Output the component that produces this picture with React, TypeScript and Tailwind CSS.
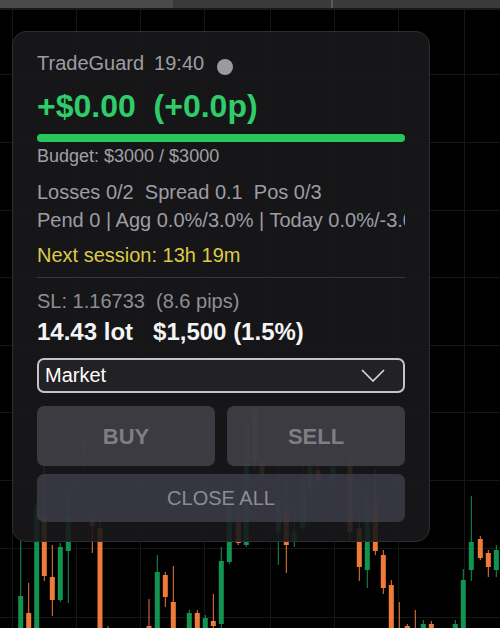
import React from 'react'

type Candle = { x: number; wt: number; bt: number; bb: number; wb: number; up: boolean }

// chart candles behind the panel (x, wick top, body top, body bottom, wick bottom)
const candles: Candle[] = [
  { x: 20.7, wt: 540, bt: 596, bb: 640, wb: 640, up: true },
  { x: 28.7, wt: 583, bt: 613, bb: 640, wb: 640, up: false },
  { x: 36.7, wt: 500, bt: 505, bb: 640, wb: 640, up: true },
  { x: 44.3, wt: 460, bt: 515, bb: 576, wb: 581, up: false },
  { x: 52.3, wt: 545, bt: 577, bb: 600, wb: 616, up: false },
  { x: 60.3, wt: 543, bt: 547, bb: 600, wb: 602, up: true },
  { x: 68.3, wt: 490, bt: 515, bb: 551, wb: 603, up: true },
  { x: 84, wt: 427, bt: 440, bb: 452, wb: 470, up: true },
  { x: 92.3, wt: 515, bt: 521, bb: 526, wb: 553, up: false },
  { x: 100, wt: 520, bt: 528, bb: 640, wb: 640, up: false },
  { x: 108, wt: 626, bt: 630, bb: 640, wb: 640, up: false },
  { x: 149, wt: 599, bt: 626, bb: 640, wb: 640, up: false },
  { x: 157.3, wt: 555, bt: 572, bb: 640, wb: 640, up: true },
  { x: 165.3, wt: 572, bt: 575, bb: 597, wb: 607, up: false },
  { x: 173.3, wt: 566, bt: 602, bb: 640, wb: 640, up: false },
  { x: 189.3, wt: 610, bt: 613, bb: 640, wb: 640, up: true },
  { x: 197.3, wt: 610, bt: 613, bb: 640, wb: 640, up: false },
  { x: 205.3, wt: 615, bt: 618, bb: 640, wb: 640, up: true },
  { x: 213.3, wt: 594, bt: 621, bb: 626, wb: 640, up: false },
  { x: 221.3, wt: 547, bt: 561, bb: 624, wb: 640, up: true },
  { x: 229.3, wt: 480, bt: 490, bb: 562, wb: 564, up: true },
  { x: 238.3, wt: 510, bt: 522, bb: 543, wb: 545, up: false },
  { x: 246.3, wt: 407, bt: 422, bb: 545, wb: 547, up: true },
  { x: 254.7, wt: 405, bt: 410, bb: 460, wb: 470, up: false },
  { x: 262, wt: 455, bt: 463, bb: 475, wb: 480, up: false },
  { x: 278.3, wt: 455, bt: 500, bb: 532, wb: 565, up: true },
  { x: 286.3, wt: 480, bt: 510, bb: 545, wb: 573, up: false },
  { x: 294.3, wt: 500, bt: 532, bb: 542, wb: 547, up: true },
  { x: 302.7, wt: 455, bt: 480, bb: 528, wb: 530, up: true },
  { x: 310, wt: 455, bt: 467, bb: 490, wb: 495, up: true },
  { x: 318, wt: 460, bt: 470, bb: 480, wb: 490, up: false },
  { x: 333, wt: 450, bt: 463, bb: 480, wb: 490, up: true },
  { x: 350, wt: 455, bt: 465, bb: 532, wb: 540, up: false },
  { x: 359.3, wt: 515, bt: 528, bb: 567, wb: 581, up: false },
  { x: 367.3, wt: 490, bt: 505, bb: 570, wb: 588, up: true },
  { x: 375.3, wt: 470, bt: 500, bb: 551, wb: 555, up: false },
  { x: 383.3, wt: 550, bt: 555, bb: 588, wb: 594, up: false },
  { x: 391.3, wt: 580, bt: 585, bb: 640, wb: 640, up: false },
  { x: 399.3, wt: 602, bt: 630, bb: 640, wb: 640, up: false },
  { x: 407.3, wt: 624, bt: 626, bb: 640, wb: 640, up: false },
  { x: 415.3, wt: 610, bt: 630, bb: 640, wb: 640, up: false },
  { x: 423.3, wt: 620, bt: 624, bb: 640, wb: 640, up: true },
  { x: 431.3, wt: 621, bt: 624, bb: 640, wb: 640, up: false },
  { x: 455.3, wt: 620, bt: 624, bb: 640, wb: 640, up: true },
  { x: 463.3, wt: 569, bt: 580, bb: 640, wb: 640, up: true },
  { x: 471.3, wt: 496, bt: 542, bb: 570, wb: 581, up: true },
  { x: 480.3, wt: 536, bt: 539, bb: 558, wb: 560, up: false },
  { x: 488.3, wt: 550, bt: 553, bb: 567, wb: 577, up: false },
  { x: 496.3, wt: 545, bt: 550, bb: 570, wb: 577, up: true },
]

const gridX = [12, 76, 140, 204, 270, 334, 398, 464]
const gridY = [74, 142, 210, 277, 345, 412, 480, 548, 617]

function Chart() {
  return (
    <svg className="absolute inset-0" width="500" height="628" viewBox="0 0 500 628">
      {gridX.map(x => (
        <line key={'x' + x} x1={x + 0.5} y1={10} x2={x + 0.5} y2={628} stroke="#161616" strokeWidth="1" />
      ))}
      {gridY.map(y => (
        <line key={'y' + y} x1={0} y1={y + 0.5} x2={500} y2={y + 0.5} stroke="#161616" strokeWidth="1" />
      ))}
      {candles.map((c, i) => {
        const color = c.up ? '#12934f' : '#f07a3a'
        return (
          <g key={i}>
            <line x1={c.x} y1={c.wt} x2={c.x} y2={c.wb} stroke={color} strokeWidth="1" />
            <rect x={c.x - 2.5} y={c.bt} width="5" height={Math.max(c.bb - c.bt, 1)} fill={color} />
          </g>
        )
      })}
    </svg>
  )
}

export default function App() {
  return (
    <div className="relative w-[500px] h-[628px] overflow-hidden bg-black font-['Liberation_Sans',Arial,sans-serif]">
      <Chart />

      {/* top toolbar strip */}
      <div className="relative flex h-[8px] border-b-2 border-[#1a1a1a] box-content">
        <div className="w-[173px] bg-[#4a4a4c]" />
        <div className="w-[158px] bg-[#3a3a3c]" />
        <div className="w-[2px] bg-[#5a5a5c]" />
        <div className="flex-1 bg-[#3a3a3c]" />
      </div>

      {/* TradeGuard panel */}
      <div className="absolute left-[12px] top-[31px] w-[418px] rounded-[14px] border border-[#2c2c31] bg-[#18181b]/90 px-6 pt-[17px] pb-[19px]">
        <div className="flex items-center text-[20px] leading-7 text-[#9d9da3]">
          <span>TradeGuard</span>
          <span className="ml-[10px]">19:40</span>
          <span className="ml-[13px] mt-2 h-4 w-4 rounded-full bg-[#9a9aa1]" />
        </div>

        <div className="mt-[9px] whitespace-pre text-[32px] font-bold leading-[40px] text-[#2fcd69]">
          {'+$0.00  (+0.0p)'}
        </div>

        <div className="mt-2 h-2 w-full rounded-full bg-[#27c75e]" />

        <div className="mt-[2px] text-[18px] leading-6 text-[#a0a0a6]">Budget: $3000 / $3000</div>

        <div className="mt-[10px] whitespace-pre text-[20px] leading-7 text-[#9d9da3]">
          {'Losses 0/2  Spread 0.1  Pos 0/3'}
        </div>
        <div className="overflow-hidden whitespace-pre text-[20px] leading-7 text-[#9d9da3]">
          {'Pend 0 | Agg 0.0%/3.0% | Today 0.0%/-3.0%'}
        </div>

        <div className="mt-[7px] text-[20px] leading-7 text-[#dccb48]">Next session: 13h 19m</div>

        <div className="mt-2 h-px w-full bg-[#38383d]" />

        <div className="mt-[9px] whitespace-pre text-[20px] leading-7 text-[#8e8e94]">
          {'SL: 1.16733  (8.6 pips)'}
        </div>
        <div className="mt-px whitespace-pre text-[24px] font-bold leading-8 text-[#f4f4f5]">
          {'14.43 lot   $1,500 (1.5%)'}
        </div>

        <div className="mt-[10px] flex h-[35px] items-center justify-between rounded-[7px] border-2 border-[#c4c4c8] bg-[#222225] pl-[6px] pr-[18px]">
          <span className="text-[20px] leading-[31px] text-white">Market</span>
          <svg width="24" height="13" viewBox="0 0 24 13" fill="none">
            <polyline points="1,1 12,12 23,1" stroke="#d8d8dc" strokeWidth="1.6" />
          </svg>
        </div>

        <div className="mt-[13px] grid grid-cols-2 gap-3">
          <button className="h-[60px] rounded-[7px] bg-[#4b4b52]/70 text-[22px] font-bold text-[#7e7e85]">BUY</button>
          <button className="h-[60px] rounded-[7px] bg-[#4b4b52]/70 text-[22px] font-bold text-[#7e7e85]">SELL</button>
        </div>

        <button className="mt-2 h-12 w-full rounded-[7px] bg-[#42424e]/75 text-[20px] text-[#8c8c95]">CLOSE ALL</button>
      </div>
    </div>
  )
}
